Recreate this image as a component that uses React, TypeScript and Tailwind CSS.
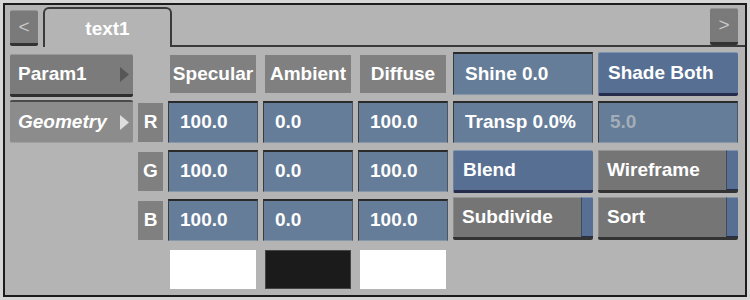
import React from 'react';

const font = { fontFamily: '"Liberation Sans", Arial, sans-serif' };

const ValueBox: React.FC<{ text: string; dim?: boolean; className?: string }> = ({ text, dim, className = '' }) => (
  <div
    className={`h-[42px] flex items-center pl-[11px] bg-[#657d98] border-t-2 border-t-[#2a2a2a] border-l border-l-[#3b3b3b] border-r border-r-[#4a5565] border-b border-b-[#8797aa] ${
      dim ? 'text-[#a3adb9]' : 'text-white'
    } ${className}`}
  >
    {text}
  </div>
);

const Header: React.FC<{ text: string }> = ({ text }) => (
  <div className="mt-[3px] mx-[2px] h-[38px] flex items-center justify-center bg-[#808080] text-white">{text}</div>
);

const Channel: React.FC<{ text: string }> = ({ text }) => (
  <div className="mt-[2px] h-[39px] flex items-center justify-center bg-[#808080] text-white">{text}</div>
);

const BlueButton: React.FC<{ text: string; className?: string }> = ({ text, className = '' }) => (
  <div
    className={`h-[43px] flex items-center pl-[9px] bg-[#566f92] border-t border-t-[#7f94b1] border-l border-l-[#6c82a2] border-b-[3px] border-b-[#262d4c] rounded-[2px] text-white ${className}`}
  >
    {text}
  </div>
);

const ToggleButton: React.FC<{ text: string; className?: string }> = ({ text, className = '' }) => (
  <div className={`h-[43px] flex rounded-[2px] overflow-hidden border-b-[3px] border-b-[#333333] ${className}`}>
    <div className="flex-1 flex items-center pl-[8px] bg-[#757575] border-t border-t-[#959595] border-l border-l-[#8a8a8a] text-white">
      {text}
    </div>
    <div className="w-[12px] bg-[#566f92] border-t border-t-[#7f94b1] border-l border-l-[#3f4a5e] border-b-[1px] border-b-[#262d4c]" />
  </div>
);

const Triangle: React.FC<{ color: string }> = ({ color }) => (
  <svg width="9" height="15" viewBox="0 0 9 15" className="mr-[4px]">
    <polygon points="0,0 9,7.5 0,15" fill={color} />
  </svg>
);

export default function App() {
  return (
    <div className="w-[750px] h-[300px] bg-[#d6d6d6] p-[3px] text-[19px] font-bold" style={font}>
      <div className="h-full border-2 border-[#1c1c1c] bg-[#b4b4b4] flex flex-col">
        {/* Tab bar */}
        <div className="h-[42px] flex items-end">
          <div className="ml-[5px] mb-[1px] w-[28px] h-[36px] flex items-center justify-center bg-[#7a7a7a] border-t border-t-[#959595] border-b-[3px] border-b-[#333333] rounded-[2px] text-[#c8c8c8] font-normal">
            &lt;
          </div>
          <div className="ml-[5px] w-[129px] h-[40px] border-2 border-b-0 border-[#3a3a3a] rounded-t-[6px] flex justify-center pt-[6px] text-white">
            text1
          </div>
          <div className="flex-1 h-full flex justify-end items-end pr-[7px] border-b-2 border-b-[#3a3a3a]">
            <div className="w-[28px] h-[37px] flex items-center justify-center bg-[#7a7a7a] border-t border-t-[#959595] border-b-[3px] border-b-[#333333] rounded-[2px] text-[#c8c8c8] font-normal">
              &gt;
            </div>
          </div>
        </div>

        {/* Parameter grid */}
        <div className="mt-[5px] pl-[5px] grid grid-cols-[123px_25px_90px_90px_90px_140px_140px] gap-x-[5px] gap-y-[5px] auto-rows-[44px]">
          {/* row 1 */}
          <div className="mt-[2px] h-[43px] flex items-center justify-between pl-[8px] bg-[#7b7b7b] border-t border-t-[#979797] border-b-[3px] border-b-[#2e2e2e] rounded-[2px] text-white">
            Param1
            <Triangle color="#575757" />
          </div>
          <div />
          <Header text="Specular" />
          <Header text="Ambient" />
          <Header text="Diffuse" />
          <ValueBox text="Shine 0.0" className="h-[43px] pl-[9px]" />
          <BlueButton text="Shade Both" className="h-[44px]" />

          {/* row 2 */}
          <div className="h-[43px] -mt-[1px] flex items-center justify-between pl-[8px] bg-[#8c8c8c] border-t-2 border-t-[#4a4a4a] border-b border-b-[#a0a0a0] rounded-[2px] text-white italic">
            Geometry
            <Triangle color="#dedede" />
          </div>
          <Channel text="R" />
          <ValueBox text="100.0" />
          <ValueBox text="0.0" />
          <ValueBox text="100.0" />
          <ValueBox text="Transp 0.0%" className="pl-[9px]" />
          <ValueBox text="5.0" dim className="pl-[9px]" />

          {/* row 3 */}
          <div />
          <Channel text="G" />
          <ValueBox text="100.0" />
          <ValueBox text="0.0" />
          <ValueBox text="100.0" />
          <BlueButton text="Blend" />
          <ToggleButton text="Wireframe" />

          {/* row 4 */}
          <div />
          <Channel text="B" />
          <ValueBox text="100.0" />
          <ValueBox text="0.0" />
          <ValueBox text="100.0" />
          <ToggleButton text="Subdivide" className="-mt-[2px]" />
          <ToggleButton text="Sort" className="-mt-[2px]" />

          {/* row 5: swatches */}
          <div />
          <div />
          <div className="mt-[2px] mx-[2px] h-[39px] bg-white" />
          <div className="mt-[2px] mx-[2px] h-[39px] bg-[#1b1b1b] border border-[#444444]" />
          <div className="mt-[2px] mx-[2px] h-[39px] bg-white" />
        </div>
      </div>
    </div>
  );
}
